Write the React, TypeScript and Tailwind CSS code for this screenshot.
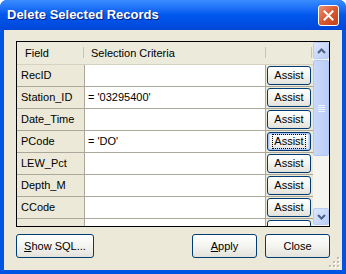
import React from 'react';

const rows: { field: string; criteria: string; focused?: boolean; partial?: boolean }[] = [
  { field: 'RecID', criteria: '' },
  { field: 'Station_ID', criteria: "= '03295400'" },
  { field: 'Date_Time', criteria: '' },
  { field: 'PCode', criteria: "= 'DO'", focused: true },
  { field: 'LEW_Pct', criteria: '' },
  { field: 'Depth_M', criteria: '' },
  { field: 'CCode', criteria: '' },
  { field: '', criteria: '', partial: true },
];

const AssistButton: React.FC<{ focused?: boolean; partial?: boolean }> = ({ focused, partial }) => (
  <div
    className={`ml-[1px] mt-[1px] w-[44px] h-[19px] shrink-0 rounded-[3px] border border-[#003C74] bg-gradient-to-b from-[#FFFFFF] via-[#F4F4F0] to-[#E3E2DA] flex items-center justify-center ${
      focused ? 'shadow-[inset_0_0_0_1px_#A8C4F4,inset_0_0_0_2px_#CEDDF8]' : ''
    }`}
  >
    {!partial && (
      <span
        className={`px-[1px] leading-[13px] ${focused ? 'outline outline-1 outline-dotted outline-black' : ''}`}
      >
        Assist
      </span>
    )}
  </div>
);

const XpButton: React.FC<{ className?: string; children: React.ReactNode }> = ({ className, children }) => (
  <div
    className={`h-[24px] rounded-[3px] border border-[#003C74] bg-gradient-to-b from-[#FFFFFF] via-[#F4F4F0] to-[#E3E2DA] flex items-center justify-center ${className ?? ''}`}
  >
    {children}
  </div>
);

export default function App() {
  return (
    <div
      className="w-[346px] h-[274px] flex flex-col bg-[#0054E3] rounded-t-[7px] overflow-hidden text-[11px] text-black"
      style={{ fontFamily: '"Liberation Sans", Arial, sans-serif' }}
    >
      {/* title bar */}
      <div className="h-[30px] shrink-0 flex items-center justify-between pl-[7px] pr-[7px] bg-gradient-to-b from-[#3A8CFF] via-[#0058EE] to-[#0046D8]">
        <span className="text-white font-bold text-[13px] [text-shadow:1px_1px_0_#0A1E7A] mb-[1px]">
          Delete Selected Records
        </span>
        <div className="w-[21px] h-[21px] rounded-[3px] border border-white bg-gradient-to-br from-[#EC8E74] via-[#D9582F] to-[#C3401B] flex items-center justify-center">
          <svg width="11" height="11" viewBox="0 0 11 11">
            <path d="M1.5 1.5 L9.5 9.5 M9.5 1.5 L1.5 9.5" stroke="white" strokeWidth="2" strokeLinecap="square" />
          </svg>
        </div>
      </div>

      {/* body */}
      <div className="flex-1 mx-[4px] mb-[4px] bg-[#ECE9D8] flex flex-col pt-[11px] px-[12px] relative">
        {/* grid */}
        <div className="h-[186px] border border-black flex overflow-hidden">
          <div className="flex-1 flex flex-col overflow-hidden">
            {/* header */}
            <div className="h-[23px] shrink-0 flex bg-[#EBEADB] border-b border-[#D6D2C2]">
              <div className="w-[68px] flex items-center pl-[8px] relative">
                Field
                <div className="absolute right-[1px] top-[5px] h-[11px] w-px bg-[#C7C5B2]" />
              </div>
              <div className="w-[181px] flex items-center pl-[6px] relative">
                Selection Criteria
                <div className="absolute right-0 top-[5px] h-[11px] w-px bg-[#C7C5B2]" />
              </div>
              <div className="flex-1 relative">
                <div className="absolute right-[1px] top-[5px] h-[11px] w-px bg-[#C7C5B2]" />
              </div>
            </div>
            {rows.map((r, i) => (
              <div key={i} className="h-[22px] shrink-0 flex border-b border-[#ACA899]">
                <div className="w-[68px] shrink-0 bg-[#ECE9D8] border-r border-[#ACA899] flex items-center pl-[4px]">
                  {r.field}
                </div>
                <div className="w-[181px] shrink-0 bg-white border-r border-[#ACA899] flex items-center pl-[3px]">
                  {r.criteria}
                </div>
                <div className="flex-1 bg-[#ECE9D8]">
                  <AssistButton focused={r.focused} partial={r.partial} />
                </div>
              </div>
            ))}
          </div>

          {/* scrollbar */}
          <div className="w-[16px] shrink-0 flex flex-col bg-[#F5F4EE]">
            <div className="h-[17px] shrink-0 rounded-[2px] border border-[#B9CCF3] bg-gradient-to-br from-[#DDE7FD] to-[#B8CDF8] flex items-center justify-center">
              <svg width="9" height="6" viewBox="0 0 9 6">
                <path d="M1 5 L4.5 1.5 L8 5" stroke="#4D6185" strokeWidth="2" fill="none" />
              </svg>
            </div>
            <div className="h-[96px] shrink-0 mt-[1px] rounded-[2px] border border-[#B0C6F5] bg-gradient-to-r from-[#C9D9FC] to-[#B9CDF8] flex flex-col items-center justify-center gap-[1px]">
              <div className="w-[7px] h-px bg-[#EEF4FE]" />
              <div className="w-[7px] h-px bg-[#EEF4FE]" />
              <div className="w-[7px] h-px bg-[#EEF4FE]" />
              <div className="w-[7px] h-px bg-[#EEF4FE]" />
            </div>
            <div className="flex-1" />
            <div className="h-[17px] shrink-0 mb-[1px] rounded-[2px] border border-[#B9CCF3] bg-gradient-to-br from-[#DDE7FD] to-[#B8CDF8] flex items-center justify-center">
              <svg width="9" height="6" viewBox="0 0 9 6">
                <path d="M1 1 L4.5 4.5 L8 1" stroke="#4D6185" strokeWidth="2" fill="none" />
              </svg>
            </div>
          </div>
        </div>

        {/* bottom buttons */}
        <div className="mt-[7px] flex items-start">
          <XpButton className="w-[78px]">
            <span>
              <span className="underline">S</span>how SQL...
            </span>
          </XpButton>
          <div className="flex-1" />
          <XpButton className="w-[65px]">
            <span>
              <span className="underline">A</span>pply
            </span>
          </XpButton>
          <XpButton className="w-[65px] ml-[8px]">Close</XpButton>
        </div>

        {/* resize grip */}
        <svg className="absolute right-[2px] bottom-[2px]" width="11" height="11" viewBox="0 0 11 11">
          {[
            [8, 0],
            [4, 4],
            [8, 4],
            [0, 8],
            [4, 8],
            [8, 8],
          ].map(([x, y], i) => (
            <g key={i}>
              <rect x={x + 1} y={y + 1} width="2" height="2" fill="#FFFFFF" />
              <rect x={x} y={y} width="2" height="2" fill="#C1BEAF" />
            </g>
          ))}
        </svg>
      </div>
    </div>
  );
}
